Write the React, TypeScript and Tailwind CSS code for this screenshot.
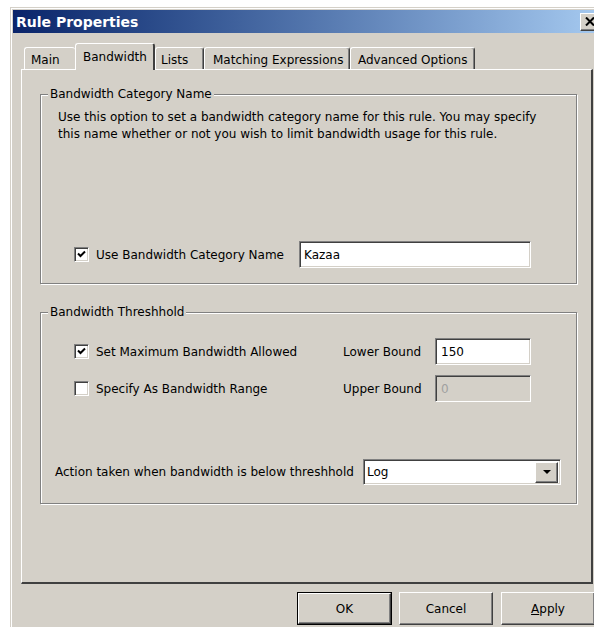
import React from "react";

// classic 3D edges
const sunken =
  "border border-t-[#808080] border-l-[#808080] border-r-white border-b-white shadow-[inset_1px_1px_0_#404040,inset_-1px_-1px_0_#d4d0c8]";
const raised =
  "border border-t-white border-l-white border-r-[#404040] border-b-[#404040] shadow-[inset_-1px_-1px_0_#808080]";

const Check = ({ checked }: { checked?: boolean }) => (
  <span
    className={`flex h-[15px] w-[15px] shrink-0 items-center justify-center bg-white ${sunken}`}
  >
    {checked && (
      <svg width="9" height="9" viewBox="0 0 9 9">
        <path d="M1 3.5 L3.5 6 L8 1.5" stroke="#000" strokeWidth="2" fill="none" />
      </svg>
    )}
  </span>
);

const Group = ({
  title,
  className,
  children,
}: {
  title: string;
  className: string;
  children: React.ReactNode;
}) => (
  <div
    className={`relative ml-[18px] w-[537px] border border-[#808080] shadow-[inset_1px_1px_0_#fff,1px_1px_0_#fff] ${className}`}
  >
    <span className="absolute left-[7px] top-[-9px] bg-[#d4d0c8] px-[2px] leading-[16px]">
      {title}
    </span>
    {children}
  </div>
);

const tabs = [
  { label: "Main", w: "w-[51px]", pl: "pl-[6px]" },
  { label: "Bandwidth", w: "w-[80px]", pl: "pl-[7px]", active: true },
  { label: "Lists", w: "w-[49px]", pl: "pl-[5px]" },
  { label: "Matching Expressions", w: "w-[146px]", pl: "pl-[8px]" },
  { label: "Advanced Options", w: "w-[125px]", pl: "pl-[7px]" },
];

const Button = ({
  children,
  className,
  primary,
}: {
  children: React.ReactNode;
  className: string;
  primary?: boolean;
}) =>
  primary ? (
    <div className={`h-[33px] border border-black ${className}`}>
      <div className={`flex h-full items-center justify-center ${raised}`}>{children}</div>
    </div>
  ) : (
    <div className={`flex h-[33px] items-center justify-center ${raised} ${className}`}>
      {children}
    </div>
  );

export default function App() {
  return (
    <div className="h-[627px] w-[594px] overflow-hidden bg-white font-['DejaVu_Sans',Verdana,sans-serif] text-[12px] text-black">
      <div className="ml-[10px] mt-[7px] w-[595px] border border-[#d4d0c8] bg-[#d4d0c8] p-[2px] pb-[20px] shadow-[inset_1px_1px_0_#fff]">
        {/* title bar */}
        <div className="flex h-[23px] items-center bg-linear-to-r from-[#0a246a] to-[#a6caf0] pl-[3px] pr-[2px]">
          <span className="text-[14px] font-bold leading-none text-white">Rule Properties</span>
          <div className={`ml-auto flex h-[18px] w-[20px] items-center justify-center bg-[#d4d0c8] ${raised}`}>
            <svg width="10" height="9" viewBox="0 0 10 9">
              <path d="M1 0.5 L9 8.5 M9 0.5 L1 8.5" stroke="#000" strokeWidth="2" />
            </svg>
          </div>
        </div>

        {/* tab strip */}
        <div className="ml-[8px] mt-[10px] flex items-end pl-[3px]">
          {tabs.map((t) =>
            t.active ? (
              <div
                key={t.label}
                className={`relative z-10 -mb-px h-[27px] ${t.w} ${t.pl} rounded-t-[3px] border-l border-t border-r-2 border-l-white border-t-white border-r-[#404040] bg-[#d4d0c8] pt-[5px] leading-[16px] whitespace-nowrap`}
              >
                {t.label}
              </div>
            ) : (
              <div
                key={t.label}
                className={`h-[22px] ${t.w} ${t.pl} rounded-t-[3px] border-l border-t border-l-white border-t-white ${
                  t.label === "Main" ? "" : "border-r border-r-[#404040] shadow-[inset_-1px_0_0_#808080]"
                } pt-[4px] leading-[16px] whitespace-nowrap`}
              >
                {t.label}
              </div>
            )
          )}
        </div>

        {/* tab page */}
        <div className="ml-[8px] h-[515px] w-[572px] border-l border-t border-r-2 border-b-2 border-l-white border-t-white border-r-[#404040] border-b-[#404040] pt-[24px]">
          <Group title="Bandwidth Category Name" className="flex h-[190px] flex-col">
            <p className="pl-[17px] pt-[14px] leading-[17px]">
              Use this option to set a bandwidth category name for this rule. You may specify
              <br />
              this name whether or not you wish to limit bandwidth usage for this rule.
            </p>
            <div className="mb-[15px] mt-auto flex items-center pl-[33px] pr-[45px]">
              <Check checked />
              <span className="ml-[7px]">Use Bandwidth Category Name</span>
              <div className={`ml-auto flex h-[27px] w-[232px] items-center bg-white pl-[4px] ${sunken}`}>
                Kazaa
              </div>
            </div>
          </Group>

          <Group title="Bandwidth Threshhold" className="mt-[28px] h-[192px] pt-[25px]">
            <div className="flex h-[27px] items-center pl-[33px] pr-[45px]">
              <Check checked />
              <span className="ml-[7px]">Set Maximum Bandwidth Allowed</span>
              <span className="ml-auto w-[92px]">Lower Bound</span>
              <div className={`flex h-[27px] w-[96px] items-center bg-white pl-[5px] ${sunken}`}>150</div>
            </div>
            <div className="mt-[10px] flex h-[27px] items-center pl-[33px] pr-[45px]">
              <Check />
              <span className="ml-[7px]">Specify As Bandwidth Range</span>
              <span className="ml-auto w-[92px]">Upper Bound</span>
              <div className={`flex h-[27px] w-[96px] items-center bg-[#d4d0c8] pl-[5px] text-[#a0a0a0] ${sunken}`}>
                0
              </div>
            </div>
            <div className="mt-[57px] flex h-[26px] items-center pl-[14px] pr-[15px]">
              <span>Action taken when bandwidth is below threshhold</span>
              <div className={`ml-auto flex h-[26px] w-[198px] items-center bg-white p-[2px] pl-[3px] ${sunken}`}>
                <span>Log</span>
                <div className={`ml-auto flex h-[21px] w-[23px] items-center justify-center bg-[#d4d0c8] ${raised}`}>
                  <svg width="8" height="4" viewBox="0 0 8 4">
                    <path d="M0 0 H8 L4 4 Z" fill="#000" />
                  </svg>
                </div>
              </div>
            </div>
          </Group>
        </div>

        {/* dialog buttons */}
        <div className="mt-[8px] flex pl-[284px]">
          <Button primary className="w-[95px]">
            OK
          </Button>
          <Button className="ml-[7px] w-[94px]">Cancel</Button>
          <Button className="ml-[8px] w-[94px]">
            <span>
              <span className="underline">A</span>pply
            </span>
          </Button>
        </div>
      </div>
    </div>
  );
}
